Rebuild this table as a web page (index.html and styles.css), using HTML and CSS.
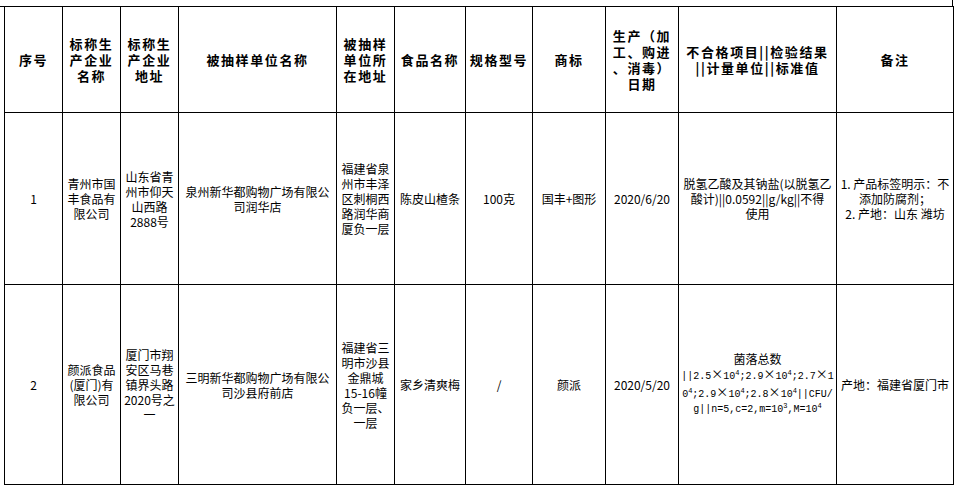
FILE: index.html
```html
<!DOCTYPE html>
<html lang="zh-CN">
<head>
<meta charset="utf-8">
<title>抽检信息</title>
<link rel="stylesheet" href="styles.css">
</head>
<body>
<div class="sheet">
<table class="grid">
  <colgroup>
    <col class="c-seq"><col class="c-name"><col class="c-addr"><col class="c-unit"><col class="c-uaddr"><col class="c-food"><col class="c-spec"><col class="c-brand"><col class="c-date"><col class="c-item"><col class="c-note">
  </colgroup>
  <thead>
    <tr class="head">
      <th>序号</th>
      <th>标称生<br>产企业<br>名称</th>
      <th>标称生<br>产企业<br>地址</th>
      <th>被抽样单位名称</th>
      <th>被抽样<br>单位所<br>在地址</th>
      <th>食品名称</th>
      <th>规格型号</th>
      <th>商标</th>
      <th>生产（加<br>工、购进<br>、消毒）<br>日期</th>
      <th>不合格项目||检验结果<br>||计量单位||标准值</th>
      <th>备注</th>
    </tr>
  </thead>
  <tbody>
    <tr class="row1">
      <td>1</td>
      <td>青州市国<br>丰食品有<br>限公司</td>
      <td>山东省青<br>州市仰天<br>山西路<br>2888号</td>
      <td>泉州新华都购物广场有限公<br>司润华店</td>
      <td>福建省泉<br>州市丰泽<br>区刺桐西<br>路润华商<br>厦负一层</td>
      <td>陈皮山楂条</td>
      <td>100克</td>
      <td>国丰+图形</td>
      <td>2020/6/20</td>
      <td>脱氢乙酸及其钠盐(以脱氢乙<br>酸计)||0.0592||g/kg||不得<br>使用</td>
      <td>1. 产品标签明示：不<br>添加防腐剂；<br>2. 产地：山东 潍坊</td>
    </tr>
    <tr class="row2">
      <td>2</td>
      <td>颜派食品<br>(厦门)有<br>限公司</td>
      <td>厦门市翔<br>安区马巷<br>镇界头路<br>2020号之<br>一</td>
      <td>三明新华都购物广场有限公<br>司沙县府前店</td>
      <td>福建省三<br>明市沙县<br>金鼎城<br>15-16幢<br>负一层、<br>一层</td>
      <td>家乡清爽梅</td>
      <td>/</td>
      <td>颜派</td>
      <td>2020/5/20</td>
      <td><span class="item-title">菌落总数</span><span class="sci">||2.5<span class="times">×</span>10<sup>4</sup>;2.9<span class="times">×</span>10<sup>4</sup>;2.7<span class="times">×</span>1<br>0<sup>4</sup>;2.9<span class="times">×</span>10<sup>4</sup>;2.8<span class="times">×</span>10<sup>4</sup>||CFU/<br>g||n=5,c=2,m=10<sup>3</sup>,M=10<sup>4</sup></span></td>
      <td>产地：福建省厦门市</td>
    </tr>
  </tbody>
</table>
</div>
</body>
</html>
```

FILE: styles.css
```css
html, body {
  margin: 0;
  padding: 0;
  background: #ffffff;
}

body {
  font-family: "Noto Sans CJK SC", "Noto Sans", sans-serif;
  color: #000000;
  width: 956px;
  height: 492px;
  overflow: hidden;
}

.sheet {
  position: relative;
  padding: 6px 0 0 4px;
}

/* stubs of the grid that continue past the crop */
.sheet::before {
  content: "";
  position: absolute;
  left: 0;
  top: 6px;
  width: 5px;
  height: 1px;
  background: #000;
}

.sheet::after {
  content: "";
  position: absolute;
  left: 952px;
  top: 0;
  width: 1px;
  height: 7px;
  background: #000;
}

.grid {
  border-collapse: collapse;
  table-layout: fixed;
  width: 950px;
}

.grid th,
.grid td {
  border: 1px solid #000;
  padding: 0;
  text-align: center;
  vertical-align: middle;
  overflow: hidden;
}

.c-seq { width: 58px; }
.c-name { width: 58px; }
.c-addr { width: 58px; }
.c-unit { width: 158px; }
.c-uaddr { width: 58px; }
.c-food { width: 71px; }
.c-spec { width: 67px; }
.c-brand { width: 73px; }
.c-date { width: 73px; }
.c-item { width: 158px; }
.c-note { width: 117px; }

.head th {
  height: 105px;
  font-size: 13px;
  font-weight: bold;
  letter-spacing: 1.6px;
  line-height: 16px;
}

.grid td {
  font-size: 12px;
  line-height: 15px;
  font-weight: normal;
}

.row1 td { height: 171px; }
.row2 td { height: 199px; }

.item-title {
  display: block;
  line-height: 14px;
}

.sci {
  display: block;
  white-space: nowrap;
  font-family: "Liberation Mono", "Noto Sans CJK SC", monospace;
  font-size: 10px;
  line-height: 15px;
}

.sci .times {
  font-family: "Noto Sans CJK SC", sans-serif;
  font-size: 12px;
}

.sci sup {
  font-size: 7px;
  line-height: 0;
  vertical-align: 4px;
}
```
